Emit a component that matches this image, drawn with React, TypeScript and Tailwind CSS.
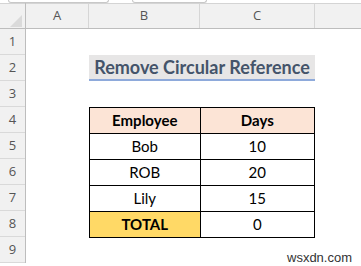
import React from "react";

const rows = [1, 2, 3, 4, 5, 6, 7, 8, 9];

const data = [
  ["Bob", "10"],
  ["ROB", "20"],
  ["Lily", "15"],
];

export default function App() {
  const cal = { fontFamily: "Lato, 'Open Sans', sans-serif" };
  const ui = { fontFamily: "'Open Sans', 'Noto Sans', sans-serif" };
  return (
    <div className="relative w-[361px] h-[266px] overflow-hidden bg-white">
      {/* top strip */}
      <div className="flex h-[3px] overflow-hidden">
        <div className="ml-[8px] w-[101px] h-[3px] border border-t-0 border-[#c8c8c8] rounded-b-[4px]" />
        <div className="ml-[23px] w-[75px] h-[3px] border border-t-0 border-[#c8c8c8] rounded-b-[4px]" />
      </div>
      <div className="flex">
        {/* row header column */}
        <div className="w-[26px] flex flex-col bg-[#f1f1f1] border-r border-[#bdbdbd]" style={ui}>
          <div className="h-[26px] border-b border-[#bdbdbd] border-t border-t-[#d4d4d4] relative">
            <div className="absolute left-[10px] top-[11px] w-0 h-0 border-l-[12px] border-l-transparent border-b-[12px] border-b-[#dadada]" />
          </div>
          {rows.map((r) => (
            <div
              key={r}
              className="h-[26px] border-b border-[#d9d9d9] flex items-center justify-center text-[13px] text-[#555]"
            >
              {r}
            </div>
          ))}
        </div>
        {/* sheet */}
        <div className="flex-1 flex flex-col">
          <div
            className="h-[26px] flex bg-[#f1f1f1] border-b border-[#bdbdbd] border-t border-t-[#d4d4d4] text-[13px] text-[#555]"
            style={ui}
          >
            <div className="w-[63px] flex items-center justify-center border-r border-[#d6d6d6]">A</div>
            <div className="w-[111px] flex items-center justify-center border-r border-[#d6d6d6]">B</div>
            <div className="w-[115px] flex items-center justify-center border-r border-[#d6d6d6]">C</div>
            <div className="flex-1" />
          </div>
          <div className="pl-[63px] flex flex-col">
            <div className="h-[26px]" />
            <div className="w-[226px] h-[26px] bg-[#e7e6e6] border-b-[2px] border-[#8eaadb] flex items-center justify-center">
              <span className="text-[18px] font-bold text-[#44546a] leading-none" style={cal}>
                Remove Circular Reference
              </span>
            </div>
            <div className="h-[26px]" />
            <div className="w-[226px] border-t border-l border-black text-[15px] text-black" style={cal}>
              <div className="flex h-[26px]">
                <div className="w-[111px] border-r border-b border-black bg-[#fce4d6] flex items-center justify-center font-bold">Employee</div>
                <div className="w-[115px] border-r border-b border-black bg-[#fce4d6] flex items-center justify-center font-bold">Days</div>
              </div>
              {data.map(([n, d]) => (
                <div key={n} className="flex h-[26px]">
                  <div className="w-[111px] border-r border-b border-black flex items-center justify-center">{n}</div>
                  <div className="w-[115px] border-r border-b border-black flex items-center justify-center">{d}</div>
                </div>
              ))}
              <div className="flex h-[26px]">
                <div className="w-[111px] border-r border-b border-black bg-[#ffd966] flex items-center justify-center font-bold">TOTAL</div>
                <div className="w-[115px] border-r border-b border-black flex items-center justify-center">0</div>
              </div>
            </div>
          </div>
        </div>
      </div>
      <div
        className="absolute left-[287px] top-[248px] text-[13px] text-[#333]"
        style={{ fontFamily: "'Liberation Sans', Arial, sans-serif" }}
      >
        wsxdn.com
      </div>
    </div>
  );
}
